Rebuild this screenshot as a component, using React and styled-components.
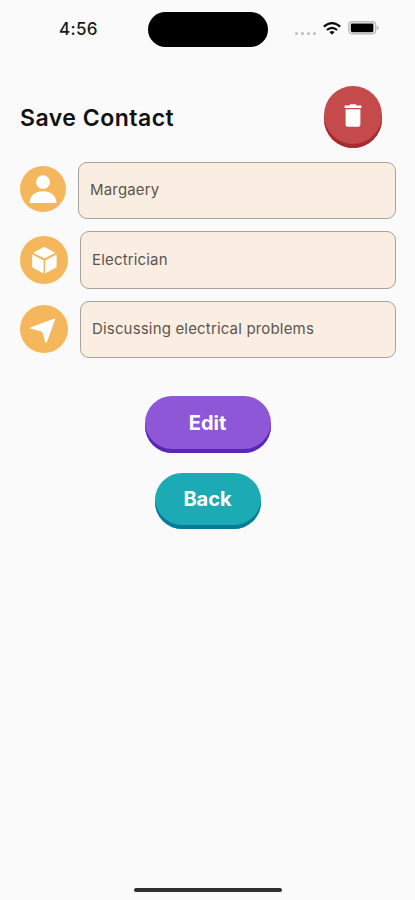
import React from 'react'
import styled, { createGlobalStyle } from 'styled-components'

const PersonIcon = () => (
  <svg width="28" height="28" viewBox="0 0 28 28" fill="#fff">
    <circle cx="14" cy="7.2" r="6.9" />
    <path d="M0.6 28C0.6 20.5 6.4 16.2 14 16.2S27.4 20.5 27.4 28Z" />
  </svg>
)

const CubeIcon = () => (
  <svg width="26" height="28" viewBox="0 0 26 28" fill="#fff">
    <path d="M13.4 0.8L24.2 6.7L13.4 12.6L2.2 6.7Z" />
    <path d="M1.2 8.5L12.6 14.6V27.6L2.1 21.8Q1.2 21.2 1.2 20.2Z" />
    <path d="M25.6 8.5L14.2 14.6V27.6L24.7 21.8Q25.6 21.2 25.6 20.2Z" />
  </svg>
)

const ArrowIcon = () => (
  <svg width="28" height="28" viewBox="0 0 28 28" fill="#fff">
    <path d="M24.6 3.6L0.2 12.4Q-0.6 12.9 0.2 13.4L10.6 16.2Q12.3 16.7 12.8 18.3L15.2 27.6Q16 28.6 16.8 27.6L25.2 4.2Q25.3 3.3 24.6 3.6Z" />
  </svg>
)

const TrashIcon = () => (
  <svg width="18" height="24" viewBox="0 0 18 24" fill="#fff">
    <path d="M0.6 1.5H5.4L6.2 0.3H11.8L12.6 1.5H17.4V4H0.6Z" />
    <path d="M1.6 5.2H16.4V20.6Q16.4 22.8 14.2 22.8H3.8Q1.6 22.8 1.6 20.6Z" />
  </svg>
)

const WifiIcon = () => (
  <svg width="18" height="13" viewBox="0 0 18 13" fill="none" stroke="#0a0a0a" strokeWidth="2.2">
    <path d="M0.8 4.7Q9 -2.4 17.2 4.7" />
    <path d="M3.9 8Q9 3.6 14.1 8" />
    <path d="M9 12.8L6.4 10.1Q9 8.1 11.6 10.1Z" fill="#0a0a0a" stroke="none" />
  </svg>
)

const BatteryIcon = () => (
  <svg width="31" height="14" viewBox="0 0 31 14">
    <rect x="0.8" y="0.7" width="26.8" height="12" rx="3.4" fill="#fafafa" stroke="#bababa" strokeWidth="1.4" />
    <rect x="2.8" y="2.4" width="22.6" height="8.8" rx="1.4" fill="#000" />
    <path d="M28.8 4.6Q30.8 5.4 30.8 6.8T28.8 9Z" fill="#bababa" />
  </svg>
)

export default function App() {
  const fields = [
    {
      icon: <PersonIcon />,
      value: "Margaery",
      size: 46,
      height: 57,
      lift: 4,
    },
    {
      icon: <CubeIcon />,
      value: "Electrician",
      size: 48,
      height: 58,
      lift: 1,
    },
    {
      icon: <ArrowIcon />,
      value: "Discussing electrical problems",
      size: 48,
      height: 57,
      lift: 1,
    },
  ];

  return (
    <Screen>
      <GlobalStyle />
      <StatusBar>
        <Time>4:56</Time>
        <Island />
        <Signals>
          <Dots><i /><i /><i /><i /></Dots>
          <WifiIcon />
          <BatteryIcon />
        </Signals>
      </StatusBar>
      <Header>
        <h1>Save Contact</h1>
        <DeleteButton aria-label="Delete"><TrashIcon /></DeleteButton>
      </Header>
      <Fields>
        {
          fields.map((field) => {
            return (
              <FieldRow key={field.value}>
                <Badge $size={field.size} $lift={field.lift}>{field.icon}</Badge>
                <Field $height={field.height}>{field.value}</Field>
              </FieldRow>
            )
          })
        }
      </Fields>
      <Actions>
        <Button $width={126} $height={57} $color="#8e57d7" $edge="#5a25b8">Edit</Button>
        <Button $width={106} $height={56} $color="#1cabb5" $edge="#087a98">Back</Button>
      </Actions>
      <HomeBar />
    </Screen>
  );
}

const GlobalStyle = createGlobalStyle`
  * {
    box-sizing: border-box;
  }
  body {
    margin: 0;
    background: #fafafa;
    font-family: Inter, "Liberation Sans", sans-serif;
  }
`;

const Screen = styled.main`
  display: flex;
  flex-direction: column;
  width: 415px;
  height: 900px;
  background: #fafafa;
`;

const StatusBar = styled.div`
  display: grid;
  grid-template-columns: 148px 120px 1fr;
  align-items: center;
  height: 58px;
`;

const Time = styled.span`
  padding-left: 59px;
  font-size: 17px;
  font-weight: 500;
  letter-spacing: 0.3px;
  color: #1b1b1b;
`;

const Island = styled.div`
  height: 35px;
  border-radius: 18px;
  background: #000;
`;

const Signals = styled.div`
  display: flex;
  align-items: center;
  gap: 7px;
  padding: 0 0 2px 27px;
`;

const Dots = styled.div`
  display: flex;
  gap: 3px;
  padding-top: 10px;
  i {
    width: 3px;
    height: 3px;
    border-radius: 50%;
    background: #bcbcbc;
  }
`;

const Header = styled.header`
  display: flex;
  align-items: center;
  justify-content: space-between;
  height: 62px;
  margin-top: 28px;
  padding: 0 33px 0 20px;
  h1 {
    margin: 0;
    padding-top: 2px;
    font-size: 23px;
    font-weight: 600;
    letter-spacing: 0.5px;
    color: #111;
  }
`;

const DeleteButton = styled.button`
  display: flex;
  align-items: center;
  justify-content: center;
  width: 58px;
  height: 62px;
  padding: 0 0 2px;
  border: none;
  border-radius: 29px;
  background: #c44a4c;
  box-shadow: inset 0 -4px 0 #a62a30;
`;

const Fields = styled.div`
  display: flex;
  flex-direction: column;
  gap: 12px;
  padding: 14px 19px 0 20px;
`;

const FieldRow = styled.div`
  display: flex;
  align-items: center;
  gap: 12px;
`;

const Badge = styled.div`
  display: flex;
  align-items: center;
  justify-content: center;
  flex: none;
  width: ${({ $size }) => $size}px;
  height: ${({ $size }) => $size}px;
  margin-bottom: ${({ $lift }) => $lift}px;
  border-radius: 50%;
  background: #f5b75b;
`;

const Field = styled.div`
  display: flex;
  align-items: center;
  flex: 1;
  height: ${({ $height }) => $height}px;
  padding: 0 11px 2px;
  border: 1px solid #a9a29a;
  border-radius: 9px;
  background: #f9eee1;
  font-size: 15px;
  letter-spacing: 0.17px;
  color: #5c554e;
`;

const Actions = styled.div`
  display: flex;
  flex-direction: column;
  align-items: center;
  gap: 20px;
  margin-top: 38px;
`;

const Button = styled.button`
  width: ${({ $width }) => $width}px;
  height: ${({ $height }) => $height}px;
  padding: 0 0 4px;
  border: none;
  border-radius: 27px;
  background: ${({ $color }) => $color};
  box-shadow: inset 0 -4px 0 ${({ $edge }) => $edge};
  font-family: inherit;
  font-size: 20px;
  font-weight: 700;
  color: #fff;
`;

const HomeBar = styled.div`
  width: 148px;
  height: 4px;
  margin: auto auto 8px;
  border-radius: 2px;
  background: #303030;
`;
